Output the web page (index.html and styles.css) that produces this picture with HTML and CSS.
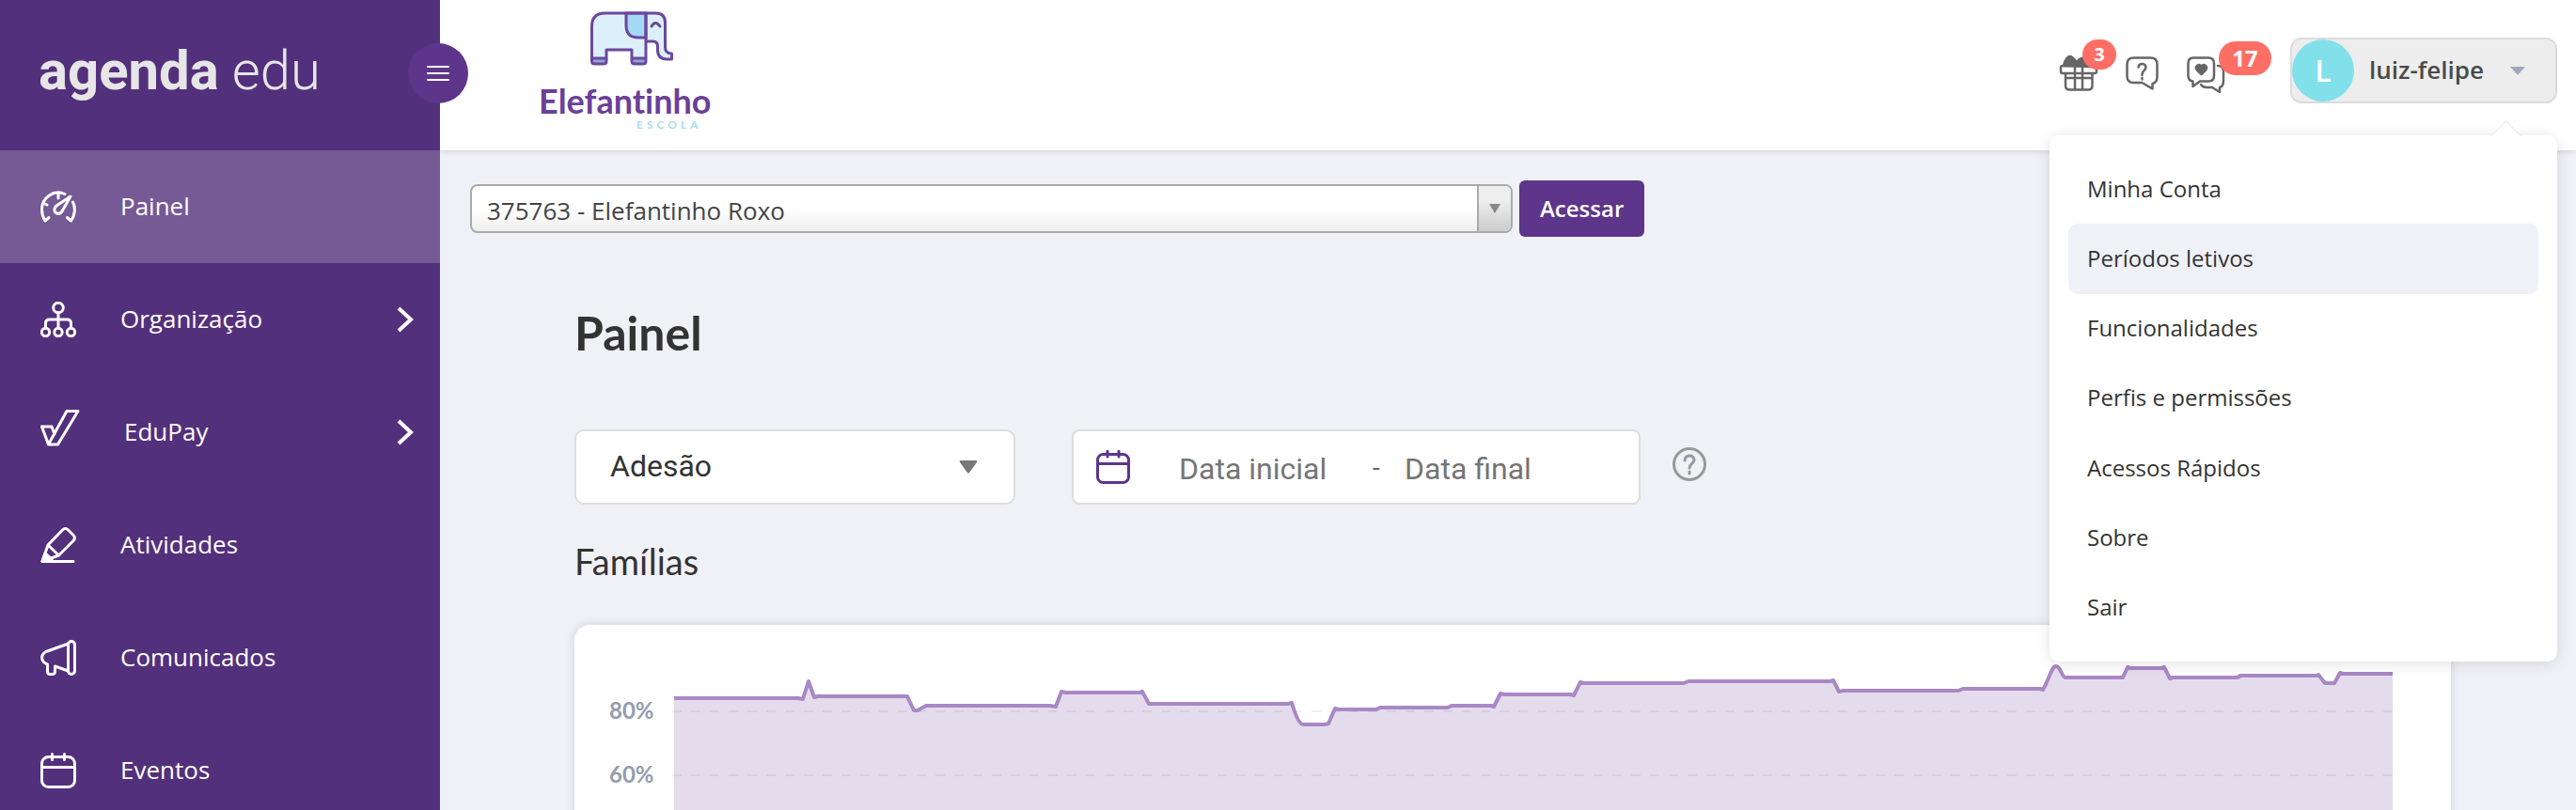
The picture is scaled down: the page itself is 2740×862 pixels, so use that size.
FILE: index.html
```html
<!DOCTYPE html>
<html lang="pt-br">
<head>
    <meta charset="UTF-8">
    <meta name="viewport" content="width=device-width, initial-scale=1.0">
    <title>Painel - Agenda Edu</title>
    <link rel="stylesheet" href="styles.css">
</head>
<body>
    <div class="app">
        <aside class="sidebar">
            <div class="brand">
                <span class="brand-name"><b>agenda</b> <span>edu</span></span>
                <button type="button" class="toggle" aria-label="Menu">
                    <svg width="24" height="18" viewBox="0 0 24 18"><path d="M1 2h22M1 9h22M1 16h22"/></svg>
                </button>
            </div>
            <nav class="nav">
                <a href="#" class="nav-item active">
                    <svg width="38" height="34" viewBox="0 0 38 34"><path d="M5 32C2.500 28 1.500 24 1.500 20A17.500 18 0 0 1 26 3.500M34.500 12C37.500 18 37 26 32.500 32M5 32l4-3.500M32.500 32l-4-3.500M19 2v6M3 13l4 2M32 6L17 16c-3.500 3-2.500 8 2 8.500 2.500 0 3.500-1.500 4.500-3.500z"/></svg>
                    <span>Painel</span>
                </a>
                <a href="#" class="nav-item">
                    <svg width="38" height="38" viewBox="0 0 38 38"><circle cx="19" cy="6.500" r="5.300"/><circle cx="5.500" cy="32.500" r="4.200"/><circle cx="19" cy="32.500" r="4.200"/><circle cx="32.500" cy="32.500" r="4.200"/><path d="M19 12v16M5.500 28v-5q0-4 4-4h19q4 0 4 4v5"/></svg>
                    <span>Organização</span>
                    <svg class="chevron" width="18" height="28" viewBox="0 0 18 28"><path d="M2 2l13 12L2 26"/></svg>
                </a>
                <a href="#" class="nav-item">
                    <svg width="42" height="48" viewBox="0 0 42 48"><path d="M28 1.500H40L18.500 37H8.500zM8.500 37L1.500 18H12l3 8"/></svg>
                    <span>EduPay</span>
                    <svg class="chevron" width="18" height="28" viewBox="0 0 18 28"><path d="M2 2l13 12L2 26"/></svg>
                </a>
                <a href="#" class="nav-item">
                    <svg width="38" height="38" viewBox="0 0 38 38"><path d="M8 19L23.500 3q3-3 6 0l5.500 5.500q3 3 0 6L19.500 30 2 36.500zM8 19l11.500 11M2 36.500h33"/><path class="solid" d="M5 28l7 6-10 2.500z"/></svg>
                    <span>Atividades</span>
                </a>
                <a href="#" class="nav-item">
                    <svg width="38" height="38" viewBox="0 0 38 38"><rect x="29.500" y="1.500" width="7" height="35" rx="3.500"/><path d="M29.500 4L6 12.500c-6 3-6 11 1.500 13.500v7.500q0 3 3 3h2q3 0 3-3V28l14 5"/></svg>
                    <span>Comunicados</span>
                </a>
                <a href="#" class="nav-item">
                    <svg width="38" height="38" viewBox="0 0 38 38"><rect x="1.500" y="4.500" width="35" height="32" rx="7"/><path d="M2 15.500h34M12.500 1.500v6M25.500 1.500v6"/></svg>
                    <span>Eventos</span>
                </a>
            </nav>
        </aside>

        <div class="page">
            <header class="header">
                <svg class="school" width="192" height="140" viewBox="0 0 192 140" role="img" aria-label="Elefantinho Escola">
                    <path class="skin" d="M59.500 65V28q0-14 14-14h54q10 0 10 10v26q0 7 7 7v6h-5q-10 0-10-10v-4q0-5-5-5h-7v21q0 3-3 3h-9q-3 0-3-3V53H75v12q0 3-3 3H62.500q-3 0-3-3z"/>
                    <path class="ear" d="M96 14v13q0 13 13 13h8V14z"/>
                    <path class="foot" d="M60 62h15v6H60zM103 62h14v6h-14z"/>
                    <path class="line" d="M59.500 65V28q0-14 14-14h54q10 0 10 10v26q0 7 7 7v6h-5q-10 0-10-10v-4q0-5-5-5h-7M117 14v51q0 3-3 3h-9q-3 0-3-3V53H75v12q0 3-3 3H62.500q-3 0-3-3M123 28q4-7 9 0M60 62h15M103 62h14"/>
                    <text class="school-name" x="3" y="121">Elefantinho</text>
                    <text class="school-sub" x="107" y="137">ESCOLA</text>
                </svg>

                <div class="actions">
                    <button type="button" class="icon-btn" aria-label="Novidades">
                        <svg width="40" height="37" viewBox="0 0 40 37"><path class="fill" d="M4 10C5 4 9-2 13 1l5 5c3-4 7-6 11-2l6 7z"/><path d="M3 10h34q2 0 2 2v4q0 2-2 2H3q-2 0-2-2v-4q0-2 2-2zM6 18h28.500v13q0 4.500-4.500 4.500H10.500Q6 35.500 6 31zM16 10v25M24 10v25M6 23h28"/></svg>
                        <span class="badge">3</span>
                    </button>
                    <button type="button" class="icon-btn" aria-label="Ajuda">
                        <svg width="35" height="36" viewBox="0 0 35 36"><path d="M8.500 1.500h18q7 0 7 7v13q0 6.500-5 7.500v5.500l-11-6.500h-9q-7 0-7-7v-12.500q0-7 7-7zM13.500 11.500q.5-3.500 4-3.500t4 3.500c0 3.500-4 3.500-4 8v.5M17.500 23v1.500"/></svg>
                    </button>
                    <button type="button" class="icon-btn" aria-label="Mensagens">
                        <svg width="41" height="40" viewBox="0 0 41 40"><path d="M7 1.500h16q6 0 6 6v13q0 6-6 6h-9L6.500 32v-5.500q-5-.5-5-6v-13q0-6 5.500-6zM33 10q6 0 6 6v10q0 6-4 7v5l-8-5h-6q-4 0-6-3"/><path class="fill" d="M15.500 19l-5-5c-2-4 3-7 5-3 2-4 7-1 5 3z"/></svg>
                        <span class="badge badge-lg">17</span>
                    </button>
                    <div class="user">
                        <button type="button" class="user-btn">
                            <span class="avatar">L</span>
                            <span class="user-name">luiz-felipe</span>
                            <svg width="16" height="9" viewBox="0 0 16 9"><path d="M0 0h16L8 9z"/></svg>
                        </button>
                        <div class="dropdown">
                            <a href="#">Minha Conta</a>
                            <a href="#" class="selected">Períodos letivos</a>
                            <a href="#">Funcionalidades</a>
                            <a href="#">Perfis e permissões</a>
                            <a href="#">Acessos Rápidos</a>
                            <a href="#">Sobre</a>
                            <a href="#">Sair</a>
                        </div>
                    </div>
                </div>
            </header>

            <form class="access">
                <div class="school-select">
                    <select aria-label="Escola">
                        <option>375763 - Elefantinho Roxo</option>
                    </select>
                    <span class="school-arrow"><svg width="12" height="10" viewBox="0 0 12 10"><path d="M0 0h12L6 10z"/></svg></span>
                </div>
                <button type="button" class="btn">Acessar</button>
            </form>

            <main class="content">
                <h1>Painel</h1>
                <div class="filters">
                    <div class="metric">
                        <select aria-label="Indicador">
                            <option>Adesão</option>
                        </select>
                        <svg width="20" height="15" viewBox="0 0 20 15"><path d="M2 1h16q2 0 1 2l-8 11q-1 1-2 0L1 3q-1-2 1-2z"/></svg>
                    </div>
                    <div class="period">
                        <svg width="36" height="36" viewBox="0 0 36 36"><rect x="1.500" y="4.500" width="33" height="30" rx="6"/><path d="M2 14.500h32M12 1v6M24 1v6"/></svg>
                        <input type="text" placeholder="Data inicial" aria-label="Data inicial">
                        <span>-</span>
                        <input type="text" placeholder="Data final" aria-label="Data final">
                    </div>
                    <button type="button" class="help" aria-label="Ajuda sobre o indicador">
                        <svg width="36" height="36" viewBox="0 0 36 36"><circle cx="18" cy="18" r="16.500"/><path d="M13 14q.5-5 5-5t5 4.500c0 4-5 4-5 8.500M18 26v2"/></svg>
                    </button>
                </div>

                <h2>Famílias</h2>
                <section class="card">
                    <div class="axis">
                        <span>80%</span>
                        <span>60%</span>
                    </div>
                    <svg class="chart" viewBox="715 689 1830 340" preserveAspectRatio="none">
                        <path class="area" d="M717 743H849L854 744 860 725 866 742 870 741H961L965 741 972 756H976L985 751H1117L1123 752 1129 736 1133 737H1212L1215 736 1222 749H1370L1374 748Q1381 771 1386 771H1409L1413 770 1420 754 1424 755H1464L1468 753H1540L1544 751H1586L1589 752 1596 738 1600 739H1670L1674 740 1681 726 1684 727H1791L1796 725H1947L1950 724 1956 736 1961 735H2083L2088 733H2170L2173 734C2180 722 2182 709 2187 709S2193 721 2197 721H2255L2258 721 2263 710 2266 711H2299L2302 710 2308 722 2311 721H2380L2383 719H2464L2466 718 2473 727H2483L2489 716 2492 717H2545V1029H717z"/>
                        <path class="grid" d="M715 757H2545M715 825H2545M715 893H2545M715 961H2545"/>
                        <path class="series" d="M717 743H849L854 744 860 725 866 742 870 741H961L965 741 972 756H976L985 751H1117L1123 752 1129 736 1133 737H1212L1215 736 1222 749H1370L1374 748Q1381 771 1386 771H1409L1413 770 1420 754 1424 755H1464L1468 753H1540L1544 751H1586L1589 752 1596 738 1600 739H1670L1674 740 1681 726 1684 727H1791L1796 725H1947L1950 724 1956 736 1961 735H2083L2088 733H2170L2173 734C2180 722 2182 709 2187 709S2193 721 2197 721H2255L2258 721 2263 710 2266 711H2299L2302 710 2308 722 2311 721H2380L2383 719H2464L2466 718 2473 727H2483L2489 716 2492 717H2545"/>
                    </svg>
                </section>
            </main>
        </div>
    </div>
</body>
</html>
```
FILE: styles.css
```css
* { box-sizing: border-box; }
body { margin: 0; background: #f0f1f7; color: #333; font-family: "Open Sans", sans-serif; font-size: 24px; }
button, select, input { font-family: inherit; margin: 0; }
button { cursor: pointer; border: none; padding: 0; }
a { color: inherit; text-decoration: none; }
svg { display: block; flex-shrink: 0; }
.app { display: flex; height: 100vh; overflow: hidden; }

/* menu lateral */
.sidebar { position: relative; z-index: 2; width: 468px; flex-shrink: 0; background: #53307c; color: #fff; }
.brand { display: flex; align-items: center; height: 160px; padding: 0 0 10px 41px; }
.brand-name { font-family: Roboto, sans-serif; font-size: 58px; font-weight: 300; line-height: 72px; color: #e6e6e6; }
.brand-name b { font-weight: 700; }
.toggle { position: absolute; top: 46px; right: -30px; width: 64px; height: 64px; border-radius: 50%; background: #5d358a; display: flex; align-items: center; justify-content: center; }
.toggle svg { stroke: #fff; stroke-width: 2; stroke-linecap: round; }
.nav-item { display: flex; align-items: center; height: 120px; padding: 0 28px 0 43px; font-size: 26px; }
.nav-item span { flex: 1; padding: 0 0 2px 47px; }
.nav-item svg { fill: none; stroke: #fff; stroke-width: 3; stroke-linecap: round; stroke-linejoin: round; }
.nav-item .solid { fill: #fff; }
.nav-item .chevron { stroke-width: 4; stroke-linecap: butt; stroke-linejoin: miter; }
.active { background: #755a96; }

/* topo */
.page { flex: 1; min-width: 0; }
.header { position: relative; z-index: 1; display: flex; justify-content: space-between; height: 160px; padding: 0 20px 0 102px; background: #fff; box-shadow: 0 1px 6px rgba(0, 0, 0, 0.15); }
.skin { fill: #dcf0fb; }
.ear { fill: #a5d8f5; stroke: #6b479c; stroke-width: 3; }
.foot { fill: #8fa5d5; }
.line { fill: none; stroke: #6b479c; stroke-width: 3; stroke-linejoin: round; stroke-linecap: round; }
.school-name { font-family: Lato, sans-serif; font-size: 36px; font-weight: 700; font-variant-ligatures: none; fill: #6b3f98; }
.school-sub { font-family: Lato, sans-serif; font-size: 12px; font-weight: 700; letter-spacing: 4px; fill: #a9dcf0; }
.actions { display: flex; align-items: flex-start; gap: 30px; padding-top: 40px; }
.icon-btn { position: relative; margin-top: 20px; background: none; }
.icon-btn svg { fill: none; stroke: #666; stroke-width: 2.5; stroke-linejoin: round; stroke-linecap: round; overflow: visible; }
.icon-btn .fill { fill: #666; }
.badge { position: absolute; top: -18px; left: 24px; width: 36px; height: 32px; border-radius: 16px; background: #ff6e64; color: #fff; font-size: 20px; font-weight: 700; line-height: 32px; text-align: center; }
.badge-lg { top: -16px; left: 34px; width: 56px; height: 36px; border-radius: 18px; font-size: 24px; line-height: 36px; }
.user { position: relative; margin-left: 39px; }
.user-btn { display: flex; align-items: center; width: 284px; height: 70px; border: 2px solid #dcdcdc; border-radius: 12px; background: #ededed; color: #4a4a4a; }
.avatar { width: 66px; height: 66px; border-radius: 50%; background: #82e0eb; color: #fff; font-size: 32px; font-weight: 600; line-height: 66px; text-align: center; }
.user-name { flex: 1; padding: 0 0 2px 16px; font-size: 26px; font-weight: 600; text-align: left; }
.user-btn svg { margin-right: 32px; fill: #a3a9bd; }
.dropdown { position: absolute; top: 104px; right: 0; display: grid; grid-auto-rows: 1fr; width: 540px; min-height: 560px; padding: 20px; border-radius: 10px; background: #fff; box-shadow: 0 2px 16px rgba(0, 0, 0, 0.12); }
.dropdown::before { content: ""; position: absolute; top: -11px; right: 43px; width: 22px; height: 22px; background: #fff; border: solid #e8e8e8; border-width: 1px 0 0 1px; transform: rotate(45deg); }
.dropdown a { position: relative; display: flex; align-items: center; padding: 0 20px 2px; border-radius: 10px; font-size: 24px; }
.dropdown .selected { background: #f0f1f7; }

/* troca de escola */
.access { display: flex; align-items: center; gap: 7px; padding: 32px 32px 0; }
.school-select { position: relative; width: 1109px; }
.school-select select { appearance: none; display: block; width: 100%; height: 52px; padding: 4px 50px 0 16px; border: 2px solid #aaa; border-radius: 8px; background: linear-gradient(#fff 50%, #eee); color: #444; font-size: 26px; }
.school-arrow { position: absolute; top: 2px; right: 2px; bottom: 2px; display: flex; align-items: center; justify-content: center; width: 36px; border-left: 2px solid #aaa; border-radius: 0 6px 6px 0; background: linear-gradient(#eee 30%, #ccc); pointer-events: none; }
.school-arrow svg { fill: #888; }
.btn { height: 60px; padding: 0 22px 2px; border-radius: 6px; background: #5d358a; color: #fff; font-size: 24px; font-weight: 600; }

/* conteudo */
.content { padding: 0 133px 0 143px; }
h1, h2 { margin: 0; font-family: Lato, sans-serif; }
h1 { padding-top: 72px; font-size: 50px; font-weight: 700; line-height: 60px; }
.filters { display: flex; align-items: center; gap: 60px; padding-top: 73px; }
.metric { position: relative; width: 469px; }
.metric select { appearance: none; display: block; width: 100%; height: 80px; padding: 0 60px 2px 36px; border: 2px solid #ddd; border-radius: 10px; background: #fff; color: #333; font-family: Roboto, sans-serif; font-size: 32px; }
.metric svg { position: absolute; top: 32px; right: 40px; fill: #777; pointer-events: none; }
.period { display: flex; align-items: center; width: 605px; height: 80px; padding: 0 24px; border: 2px solid #ddd; border-radius: 8px; background: #fff; font-family: Roboto, sans-serif; font-size: 32px; }
.period svg, .help svg { fill: none; stroke: #5d358a; stroke-width: 3; stroke-linecap: round; }
.period input { width: 180px; padding: 4px 0 0; border: none; background: none; color: #333; font-size: 32px; }
.period input:first-of-type { width: 206px; margin-left: 52px; }
.period span { width: 34px; color: #666; font-size: 28px; }
.period input::placeholder { color: #757575; opacity: 1; }
.help { margin-left: -26px; padding-bottom: 6px; background: none; }
.help svg { stroke: #999; }
h2 { padding-top: 38px; font-size: 38px; font-weight: 400; line-height: 44px; }
.card { display: flex; margin-top: 46px; padding: 24px 62px 40px 37px; border-radius: 16px; background: #fff; box-shadow: 0 0 10px rgba(50, 50, 80, 0.18); }
.axis { display: flex; flex-direction: column; width: 67px; padding-top: 33px; color: #959baf; font-family: Lato, sans-serif; font-size: 24px; font-weight: 700; line-height: 68px; }
.chart { flex: 1; min-width: 0; height: 340px; }
.area { fill: #e4dcec; }
.series { fill: none; stroke: #a888c5; stroke-width: 4; stroke-linejoin: round; }
.grid { fill: none; stroke: rgba(0, 0, 0, 0.06); stroke-width: 2; stroke-dasharray: 10; }
```
